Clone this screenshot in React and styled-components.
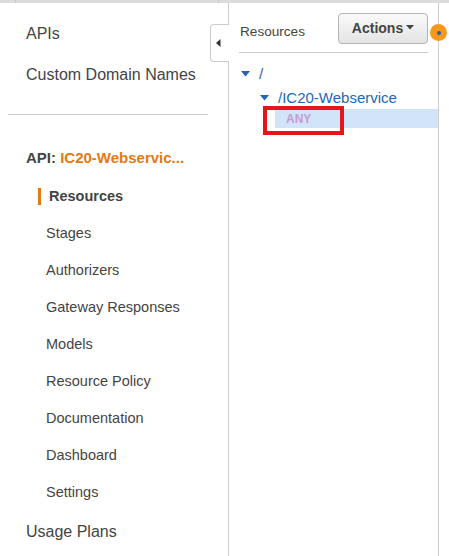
import styled, { createGlobalStyle } from 'styled-components';

const GlobalStyle = createGlobalStyle`
  html, body {
    margin: 0;
    padding: 0;
    background: #ffffff;
    overflow: hidden;
    font-family: "Liberation Sans", Arial, sans-serif;
    color: #444444;
  }
`;

const subItems = [
  'Stages',
  'Authorizers',
  'Gateway Responses',
  'Models',
  'Resource Policy',
  'Documentation',
  'Dashboard',
  'Settings',
];

function App() {
  return (
    <Page>
      <GlobalStyle />
      <TopStrip>
        <StripCell $w={15} />
        <StripCell $w={202} />
        <StripCell />
      </TopStrip>
      <Main>
        <Sidebar>
          <TopLink>APIs</TopLink>
          <TopLink>Custom Domain Names</TopLink>
          <Rule />
          <ApiHeading>
            API: <span>IC20-Webservic...</span>
          </ApiHeading>
          <SubList>
            <SubItem $active>Resources</SubItem>
            {subItems.map((item) => (
              <SubItem key={item}>{item}</SubItem>
            ))}
          </SubList>
          <TopLink>Usage Plans</TopLink>
          <CollapseTab>
            <svg width="5" height="8" viewBox="0 0 5 8">
              <path d="M4.5 0 L0 4 L4.5 8 Z" fill="#333" />
            </svg>
          </CollapseTab>
        </Sidebar>
        <Panel>
          <PanelHeader>
            <PanelTitle>Resources</PanelTitle>
            <ActionsButton>
              Actions
              <svg width="8" height="5" viewBox="0 0 8 5">
                <path d="M0 0 L8 0 L4 4.5 Z" fill="#444" />
              </svg>
            </ActionsButton>
          </PanelHeader>
          <Tree>
            <TreeRow $indent={12}>
              <Caret />
              <TreeLink>/</TreeLink>
            </TreeRow>
            <TreeRow $indent={31}>
              <Caret />
              <TreeLink>/IC20-Webservice</TreeLink>
            </TreeRow>
            <MethodRow>
              <Method>ANY</Method>
              <Highlight />
            </MethodRow>
          </Tree>
          <StatusDot />
        </Panel>
      </Main>
    </Page>
  );
}

const Caret = () => (
  <svg width="9" height="6" viewBox="0 0 9 6">
    <path d="M0 0 L9 0 L4.5 5.5 Z" fill="#1f66b3" />
  </svg>
);

const Page = styled.div`
  width: 449px;
  height: 556px;
  display: flex;
  flex-direction: column;
`;

const TopStrip = styled.div`
  height: 3px;
  display: flex;
  background: #dcdcdc;
`;

const StripCell = styled.div`
  width: ${(p) => (p.$w ? `${p.$w}px` : 'auto')};
  flex: ${(p) => (p.$w ? 'none' : '1')};
  border-right: 1px solid #c4c4c4;
  &:last-child {
    border-right: none;
  }
`;

const Main = styled.div`
  flex: 1;
  display: flex;
  min-height: 0;
`;

const Sidebar = styled.div`
  position: relative;
  width: 228px;
  border-right: 1px solid #cccccc;
  padding-top: 10px;
  box-sizing: content-box;
`;

const TopLink = styled.div`
  font-size: 16px;
  line-height: 41px;
  padding-left: 26px;
  color: #444444;
`;

const Rule = styled.div`
  height: 1px;
  background: #cccccc;
  margin: 19px 20px 0 8px;
`;

const ApiHeading = styled.div`
  margin-top: 33px;
  padding-left: 26px;
  font-size: 15px;
  font-weight: bold;
  line-height: 20px;
  color: #444444;
  span {
    color: #e47911;
  }
`;

const SubList = styled.div`
  margin-top: 10px;
  display: flex;
  flex-direction: column;
`;

const SubItem = styled.div`
  position: relative;
  font-size: 14.5px;
  line-height: 37px;
  padding-left: ${(p) => (p.$active ? '49px' : '46px')};
  font-weight: ${(p) => (p.$active ? 'bold' : 'normal')};
  color: #444444;
  &::before {
    content: "";
    display: ${(p) => (p.$active ? 'block' : 'none')};
    position: absolute;
    left: 38px;
    top: 10px;
    width: 3px;
    height: 17px;
    background: #e47911;
  }
`;

const CollapseTab = styled.div`
  position: absolute;
  right: -1px;
  top: 21px;
  width: 19px;
  height: 38px;
  background: #ffffff;
  border: 1px solid #cccccc;
  border-right: none;
  border-radius: 4px 0 0 4px;
  display: flex;
  align-items: center;
  justify-content: flex-start;
  padding-left: 5px;
  box-sizing: border-box;
`;

const Panel = styled.div`
  position: relative;
  width: 209px;
  border-right: 1px solid #cccccc;
`;

const PanelHeader = styled.div`
  margin: 0 10px;
  padding: 10px 0 8px;
  display: flex;
  align-items: center;
  justify-content: space-between;
  border-bottom: 1px solid #cccccc;
`;

const PanelTitle = styled.div`
  font-size: 13.6px;
  color: #444444;
  margin: 6px 0 0 1px;
`;

const ActionsButton = styled.div`
  width: 90px;
  height: 31px;
  box-sizing: border-box;
  border: 1px solid #b4b4b4;
  border-radius: 4px;
  background: linear-gradient(#fafafa, #e4e4e4);
  font-size: 14px;
  font-weight: bold;
  color: #444444;
  display: flex;
  align-items: center;
  justify-content: center;
  gap: 3px;
  padding-bottom: 2px;
`;

const Tree = styled.div`
  padding-top: 8px;
  display: flex;
  flex-direction: column;
`;

const TreeRow = styled.div`
  height: 24px;
  display: flex;
  align-items: center;
  gap: 9px;
  padding-left: ${(p) => p.$indent}px;
  svg {
    margin-top: 1px;
  }
`;

const TreeLink = styled.span`
  font-size: 15px;
  color: #1f66b3;
`;

const MethodRow = styled.div`
  position: relative;
  margin-left: 46px;
  height: 19px;
  background: #d1e4f8;
  display: flex;
  align-items: center;
  padding-left: 11px;
`;

const Method = styled.span`
  font-size: 12px;
  font-weight: bold;
  color: #c59bd6;
`;

const Highlight = styled.div`
  position: absolute;
  left: -12px;
  top: -3px;
  width: 81px;
  height: 29px;
  box-sizing: border-box;
  border: 4px solid #e8141c;
`;

const StatusDot = styled.div`
  position: absolute;
  right: -9px;
  top: 21px;
  width: 17px;
  height: 17px;
  border-radius: 50%;
  background: #f7981d;
  display: flex;
  align-items: center;
  justify-content: center;
  &::after {
    content: "";
    width: 4px;
    height: 4px;
    border-radius: 50%;
    background: #1f5fb3;
  }
`;

export default App;
